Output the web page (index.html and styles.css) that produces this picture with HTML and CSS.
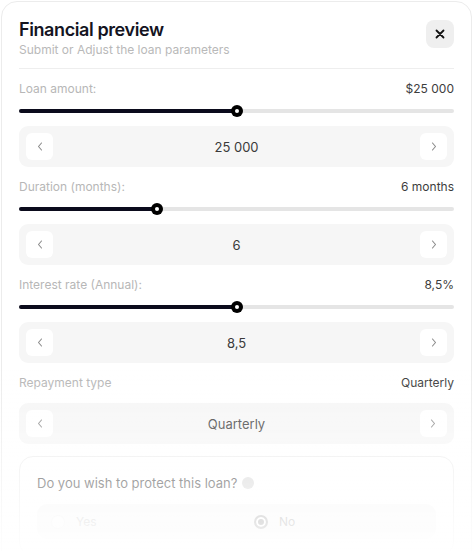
FILE: index.html
```html
<!DOCTYPE html>
<html lang="en">
<head>
<meta charset="utf-8">
<title>Financial preview</title>
<link rel="stylesheet" href="styles.css">
</head>
<body>
<div class="modal">
  <header class="head">
    <div>
      <h1 class="title">Financial preview</h1>
      <p class="subtitle">Submit or Adjust the loan parameters</p>
    </div>
    <button class="close" aria-label="Close">
      <svg width="10" height="10" viewBox="0 0 10 10"><path d="M1.5 1.5L8.5 8.5M8.5 1.5L1.5 8.5" stroke="#111" stroke-width="1.8" stroke-linecap="round"/></svg>
    </button>
  </header>

  <section class="field">
    <div class="row"><span class="label">Loan amount:</span><span class="value">$25 000</span></div>
    <div class="slider"><div class="fill" style="width:50.2%"></div><div class="thumb" style="left:50.2%"></div></div>
    <div class="stepper">
      <button class="step"><svg width="6" height="9" viewBox="0 0 6 9"><path d="M4.5 1L1.5 4.5L4.5 8" fill="none" stroke="#8a8a8a" stroke-width="1.1" stroke-linecap="round" stroke-linejoin="round"/></svg></button>
      <span class="step-value">25 000</span>
      <button class="step"><svg width="6" height="9" viewBox="0 0 6 9"><path d="M1.5 1L4.5 4.5L1.5 8" fill="none" stroke="#8a8a8a" stroke-width="1.1" stroke-linecap="round" stroke-linejoin="round"/></svg></button>
    </div>
  </section>

  <section class="field">
    <div class="row"><span class="label">Duration (months):</span><span class="value">6 months</span></div>
    <div class="slider"><div class="fill" style="width:31.8%"></div><div class="thumb" style="left:31.8%"></div></div>
    <div class="stepper">
      <button class="step"><svg width="6" height="9" viewBox="0 0 6 9"><path d="M4.5 1L1.5 4.5L4.5 8" fill="none" stroke="#8a8a8a" stroke-width="1.1" stroke-linecap="round" stroke-linejoin="round"/></svg></button>
      <span class="step-value">6</span>
      <button class="step"><svg width="6" height="9" viewBox="0 0 6 9"><path d="M1.5 1L4.5 4.5L1.5 8" fill="none" stroke="#8a8a8a" stroke-width="1.1" stroke-linecap="round" stroke-linejoin="round"/></svg></button>
    </div>
  </section>

  <section class="field">
    <div class="row"><span class="label">Interest rate (Annual):</span><span class="value">8,5%</span></div>
    <div class="slider"><div class="fill" style="width:50.2%"></div><div class="thumb" style="left:50.2%"></div></div>
    <div class="stepper">
      <button class="step"><svg width="6" height="9" viewBox="0 0 6 9"><path d="M4.5 1L1.5 4.5L4.5 8" fill="none" stroke="#8a8a8a" stroke-width="1.1" stroke-linecap="round" stroke-linejoin="round"/></svg></button>
      <span class="step-value">8,5</span>
      <button class="step"><svg width="6" height="9" viewBox="0 0 6 9"><path d="M1.5 1L4.5 4.5L1.5 8" fill="none" stroke="#8a8a8a" stroke-width="1.1" stroke-linecap="round" stroke-linejoin="round"/></svg></button>
    </div>
  </section>

  <section class="field">
    <div class="row"><span class="label">Repayment type</span><span class="value">Quarterly</span></div>
    <div class="stepper stepper-tight">
      <button class="step"><svg width="6" height="9" viewBox="0 0 6 9"><path d="M4.5 1L1.5 4.5L4.5 8" fill="none" stroke="#8a8a8a" stroke-width="1.1" stroke-linecap="round" stroke-linejoin="round"/></svg></button>
      <span class="step-value">Quarterly</span>
      <button class="step"><svg width="6" height="9" viewBox="0 0 6 9"><path d="M1.5 1L4.5 4.5L1.5 8" fill="none" stroke="#8a8a8a" stroke-width="1.1" stroke-linecap="round" stroke-linejoin="round"/></svg></button>
    </div>
  </section>

  <section class="protect">
    <div class="protect-q">Do you wish to protect this loan? <span class="info"></span></div>
    <div class="options">
      <label class="option option-off"><span class="radio"></span>Yes</label>
      <label class="option"><span class="radio radio-on"></span>No</label>
    </div>
  </section>
</div>
<div class="fade"></div>
</body>
</html>
```

FILE: styles.css
```css
* { box-sizing: border-box; }
html, body { margin: 0; padding: 0; background: #fff; }
body {
  font-family: "Inter", "Open Sans", sans-serif;
  color: #2b2b33;
  overflow: hidden;
  height: 551px;
}
.modal {
  margin: 1px 1px 0 1px;
  border: 1px solid #ececec;
  border-radius: 16px;
  padding: 16px 17px 20px 17px;
  background: #fff;
  min-height: 600px;
}
.head {
  display: flex;
  justify-content: space-between;
  align-items: flex-start;
  padding-bottom: 10px;
  border-bottom: 1px solid #eeeeee;
}
.title {
  margin: 0;
  font-size: 18px;
  line-height: 24px;
  font-weight: 600;
  color: #14141f;
  letter-spacing: -0.4px;
}
.subtitle {
  margin: 0;
  font-size: 12px;
  line-height: 16px;
  color: #b9b9b9;
}
.close {
  width: 28px;
  height: 28px;
  margin-top: 2px;
  border: 0;
  border-radius: 8px;
  background: #efefef;
  display: flex;
  align-items: center;
  justify-content: center;
  padding: 0;
}
.field { margin-top: 12px; }
.row {
  display: flex;
  justify-content: space-between;
  font-size: 12px;
  line-height: 16px;
}
.label { color: #b7b7b7; }
.value { color: #3d3d3d; }
.slider {
  position: relative;
  height: 12px;
  margin-top: 8px;
}
.slider::before {
  content: "";
  position: absolute;
  left: 0; right: 0; top: 4px;
  height: 4px;
  border-radius: 2px;
  background: #e5e5e5;
}
.fill {
  position: absolute;
  left: 0; top: 4px;
  height: 4px;
  border-radius: 2px;
  background: #0b0b1c;
}
.thumb {
  position: absolute;
  top: 0;
  width: 12px;
  height: 12px;
  margin-left: -6px;
  border-radius: 50%;
  background: #000;
}
.thumb::after {
  content: "";
  position: absolute;
  left: 4px; top: 4px;
  width: 4px; height: 4px;
  border-radius: 50%;
  background: #fff;
}
.stepper {
  margin-top: 9px;
  height: 41px;
  padding: 7px;
  border-radius: 9px;
  background: #f6f6f6;
  display: flex;
  align-items: center;
  justify-content: space-between;
}
.stepper-tight { margin-top: 12px; }
.step {
  width: 27px;
  height: 27px;
  border: 0;
  padding: 0;
  border-radius: 6px;
  background: #fff;
  display: flex;
  align-items: center;
  justify-content: center;
}
.step-value {
  font-size: 13px;
  color: #3a3a3a;
}
.protect {
  margin-top: 12px;
  border: 1px solid #ececec;
  border-radius: 14px;
  padding: 17px 17px 16px 17px;
}
.protect-q {
  font-size: 13px;
  line-height: 18px;
  color: #333;
  display: flex;
  align-items: center;
  gap: 5px;
}
.info {
  width: 12px; height: 12px;
  border-radius: 50%;
  background: #d6d6d6;
}
.options {
  margin-top: 12px;
  display: grid;
  grid-template-columns: 203px 1fr;
  background: #f6f6f6;
  border-radius: 10px;
  padding: 10px 14px;
}
.option {
  display: flex;
  align-items: center;
  gap: 11px;
  font-size: 12px;
  color: #999;
}
.option-off { color: #c4c4c4; }
.radio {
  width: 14px; height: 14px;
  border-radius: 50%;
  border: 1.5px solid #f0f0f0;
  background: #fafafa;
}
.radio-on { border: 2px solid #999; background: #fff; box-shadow: inset 0 0 0 2px #fff, inset 0 0 0 6px #888; }
.fade {
  position: fixed;
  left: 0; right: 0;
  top: 370px; bottom: 0;
  background: linear-gradient(to bottom, rgba(255,255,255,0) 0%, rgba(255,255,255,0.3) 35%, rgba(255,255,255,0.55) 62%, rgba(255,255,255,0.9) 100%);
  pointer-events: none;
}
```
